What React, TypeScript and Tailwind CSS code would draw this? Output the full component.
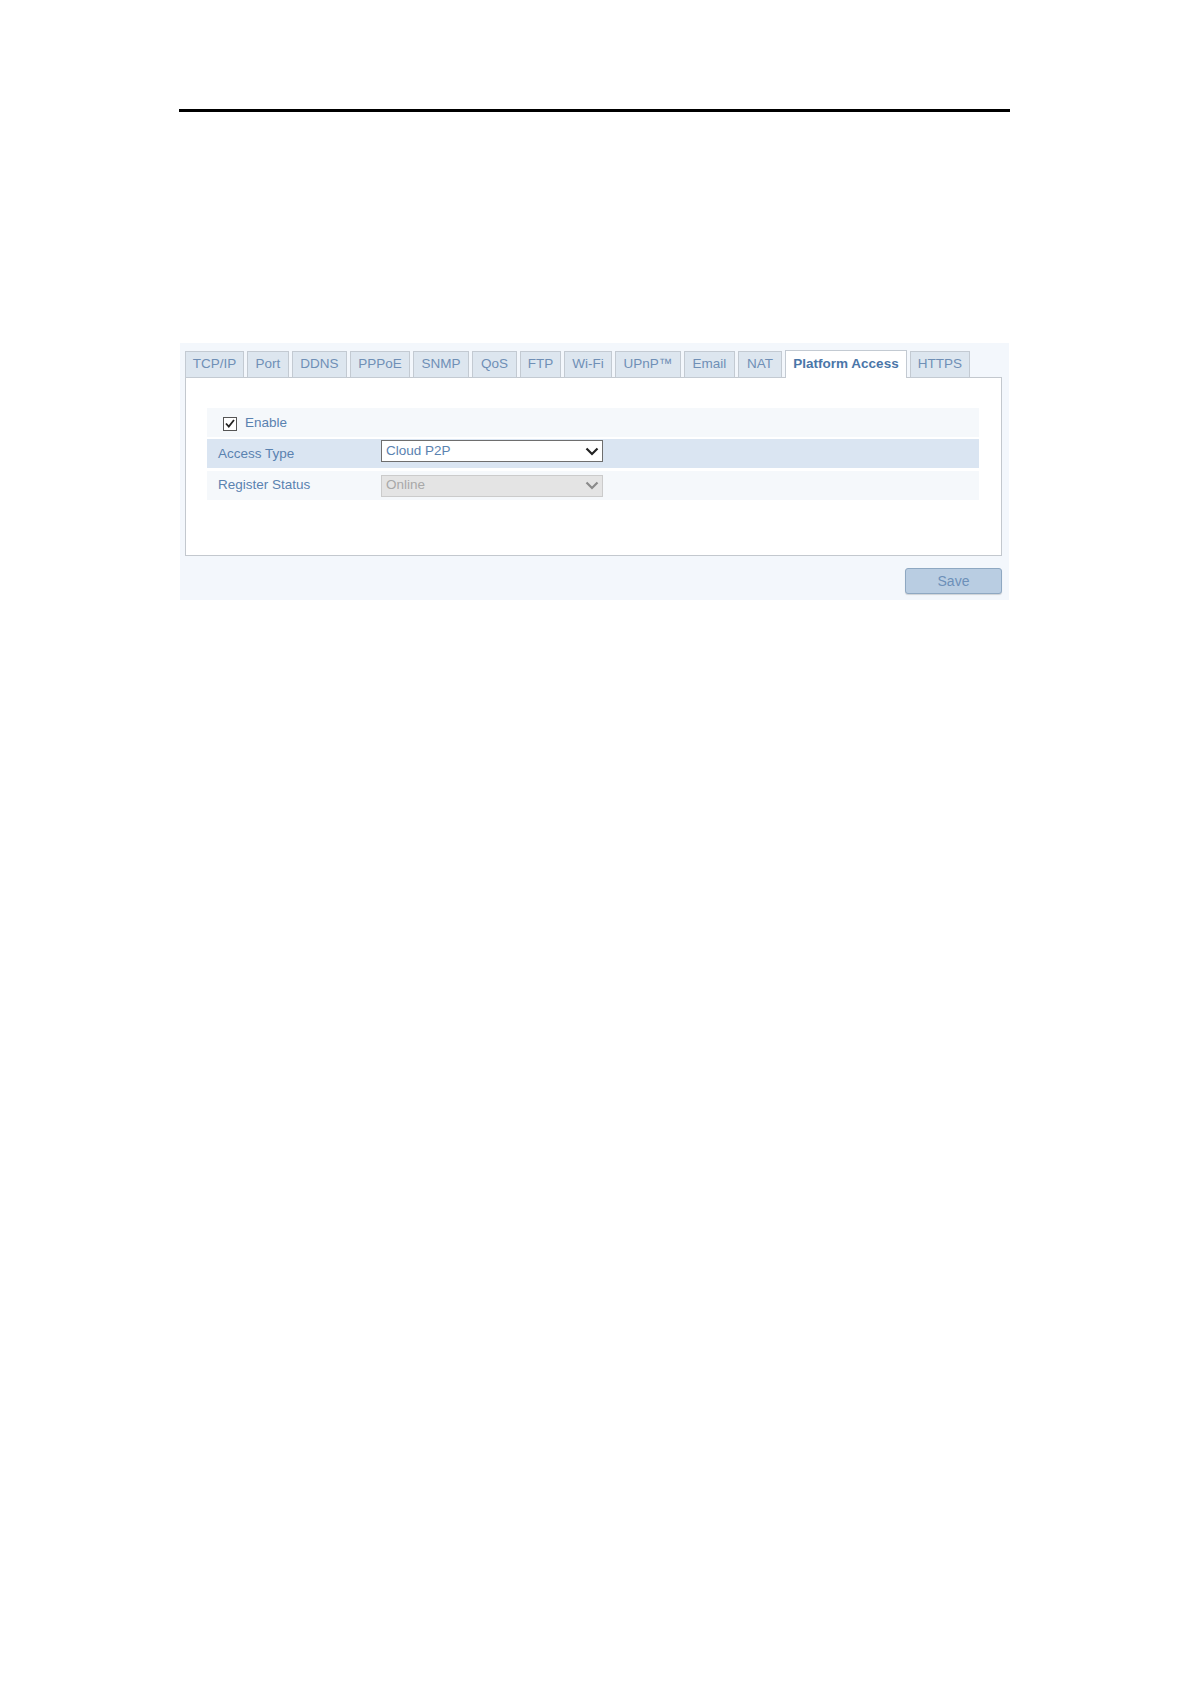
const tabs = [
  { label: "TCP/IP", w: "w-[59px]" },
  { label: "Port", w: "w-[42px]" },
  { label: "DDNS", w: "w-[55px]" },
  { label: "PPPoE", w: "w-[60px]" },
  { label: "SNMP", w: "w-[56px]" },
  { label: "QoS", w: "w-[45px]" },
  { label: "FTP", w: "w-[41px]" },
  { label: "Wi-Fi", w: "w-[48px]" },
  { label: "UPnP™", w: "w-[66px]" },
  { label: "Email", w: "w-[51px]" },
  { label: "NAT", w: "w-[44px]" },
  { label: "Platform Access", w: "w-[122px]", active: true },
  { label: "HTTPS", w: "w-[60px]" },
];

function Chevron({ color }: { color: string }) {
  return (
    <svg width="14" height="9" viewBox="0 0 14 9" fill="none">
      <path d="M1.5 1.5 L7 7 L12.5 1.5" stroke={color} strokeWidth="2.2" />
    </svg>
  );
}

export default function App() {
  return (
    <div
      className="min-h-screen w-[1191px] bg-white pt-[109px]"
      style={{ fontFamily: '"Liberation Sans", Arial, sans-serif' }}
    >
      {/* page header rule */}
      <div className="ml-[179px] h-[3px] w-[831px] bg-black" />

      {/* settings panel */}
      <div className="ml-[180px] mt-[231px] w-[829px] bg-[#f3f7fc] pl-[5px] pr-[8px] pt-[7px] pb-[6px]">
        {/* tabs */}
        <div className="relative z-10 -mb-px flex items-end gap-[3px]">
          {tabs.map((t) =>
            t.active ? (
              <div
                key={t.label}
                className={`${t.w} flex h-[28px] items-center justify-center border border-b-0 border-[#c3cad2] bg-white text-[13.5px] font-bold text-[#4a76a8]`}
              >
                {t.label}
              </div>
            ) : (
              <div
                key={t.label}
                className={`${t.w} flex h-[27px] items-center justify-center border border-[#c3cad2] bg-[#dde6ef] text-[13.5px] text-[#6f8fb6]`}
              >
                {t.label}
              </div>
            )
          )}
        </div>

        {/* content box */}
        <div className="h-[179px] w-[817px] border border-[#c3c8ce] bg-white pl-[21px] pr-[22px] pt-[30px]">
          <div className="flex h-[29px] items-center bg-[#f5f8fb] pl-[16px] pt-[2px]">
            <div className="flex h-[14px] w-[14px] items-center justify-center border border-[#555] bg-white">
              <svg width="10" height="9" viewBox="0 0 10 9" fill="none">
                <path d="M1 4.5 L3.8 7.5 L9 1" stroke="#222" strokeWidth="1.8" />
              </svg>
            </div>
            <span className="ml-[8px] text-[13.5px] text-[#5a82b0]">Enable</span>
          </div>
          <div className="mt-[2px] flex h-[29px] items-start bg-[#dae5f2]">
            <span className="mt-[5px] w-[174px] pl-[11px] text-[13.5px] text-[#5a82b0]">Access Type</span>
            <div className="mt-[1px] flex h-[22px] w-[222px] items-center justify-between border border-[#6e6e6e] bg-white pl-[4px] pr-[3px] text-[13.5px] text-[#5a82b0]">
              <span>Cloud P2P</span>
              <Chevron color="#222" />
            </div>
          </div>
          <div className="mt-[3px] flex h-[29px] items-center bg-[#f5f8fb]">
            <span className="w-[174px] pl-[11px] text-[13.5px] text-[#5a82b0]">Register Status</span>
            <div className="flex h-[22px] w-[222px] items-center justify-between border border-[#cbcbcb] bg-[#e4e4e4] pl-[4px] pr-[3px] text-[13.5px] text-[#a8a8a8]">
              <span>Online</span>
              <Chevron color="#8a8a8a" />
            </div>
          </div>
        </div>

        {/* save */}
        <div className="mt-[12px] flex w-[817px] justify-end">
          <button className="h-[26px] w-[97px] rounded-[3px] border border-[#8ea8c2] bg-[#b9cde2] text-[14px] text-[#6d90b9] shadow-[0_1px_1px_rgba(0,0,0,0.15)]">
            Save
          </button>
        </div>
      </div>
    </div>
  );
}
